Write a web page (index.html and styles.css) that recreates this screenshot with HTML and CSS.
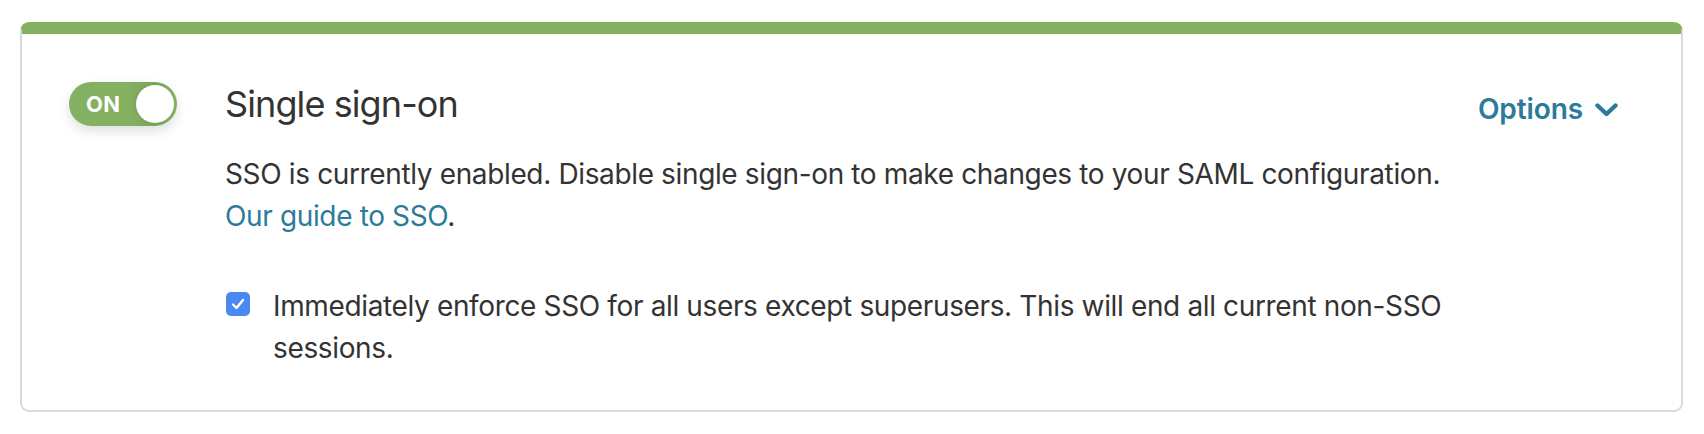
FILE: index.html
```html
<!DOCTYPE html>
<html lang="en">
<head>
<meta charset="utf-8">
<title>Single sign-on</title>
<link rel="stylesheet" href="styles.css">
</head>
<body>
<section class="card">
  <div class="toggle-col">
    <div class="toggle">
      <span class="toggle-label">ON</span>
      <span class="toggle-knob"></span>
    </div>
  </div>
  <div class="content">
    <div class="header">
      <h2 class="title">Single sign-on</h2>
      <button class="options">Options
        <svg class="chev" width="23" height="14" viewBox="0 0 23 14"><path d="M2.5 2.5 L11.5 11 L20.5 2.5" fill="none" stroke="currentColor" stroke-width="4.4" stroke-linecap="round" stroke-linejoin="round"/></svg>
      </button>
    </div>
    <p class="desc">SSO is currently enabled. Disable single sign-on to make changes to your SAML configuration.<br><a class="link" href="#">Our guide to SSO</a>.</p>
    <label class="check-row">
      <span class="checkbox"><svg width="14" height="12" viewBox="0 0 14 12"><path d="M2 6.5 L5.5 10 L12 2" fill="none" stroke="#fff" stroke-width="2.4" stroke-linecap="round" stroke-linejoin="round"/></svg></span>
      <span class="check-text">Immediately enforce SSO for all users except superusers. This will end all current non-SSO sessions.</span>
    </label>
  </div>
</section>
</body>
</html>
```
FILE: styles.css
```css
* { box-sizing: border-box; }
html, body { margin: 0; padding: 0; background: #fff; }
body {
  font-family: Inter, "Noto Sans", "Liberation Sans", sans-serif;
  color: #333;
  padding: 22px 21px 0 20px;
}
.card {
  display: flex;
  border: 2px solid #d9d9d9;
  border-top: 12px solid #84b062;
  border-radius: 9px;
  padding: 48px 63px 46px 47px;
  height: 390px;
}
.toggle-col { flex: 0 0 auto; margin-right: 48px; }
.toggle {
  position: relative;
  width: 108px;
  height: 44px;
  border-radius: 22px;
  background: linear-gradient(90deg, #84b062 0%, #84b062 55%, #7aa659 80%, #84b062 100%);
  box-shadow: 0 5px 12px rgba(0,0,0,0.13);
  display: flex;
  align-items: center;
}
.toggle-label {
  color: #fff;
  font-weight: 700;
  font-size: 22px;
  line-height: 1;
  margin-left: 17px;
  letter-spacing: 0.2px;
}
.toggle-knob {
  position: absolute;
  right: 3px;
  top: 3px;
  width: 38px;
  height: 38px;
  border-radius: 50%;
  background: #fff;
  box-shadow: -1px 0 3px rgba(0,0,0,0.08);
}
.content { flex: 1 1 auto; min-width: 0; }
.header { display: flex; justify-content: space-between; align-items: flex-start; }
.title {
  margin: 0;
  font-size: 36px;
  line-height: 44px;
  font-weight: 400;
  color: #333;
  letter-spacing: -0.9px;
}
.options {
  margin-top: 6px;
  border: 0;
  background: none;
  padding: 0;
  font-family: inherit;
  font-size: 28px;
  line-height: 42px;
  font-weight: 600;
  color: #2c7b9b;
  display: flex;
  align-items: center;
  gap: 12px;
  letter-spacing: -0.1px;
}
.chev { display: block; margin-top: 2px; }
.desc {
  margin: 23px 0 0 0;
  font-size: 28px;
  line-height: 42px;
  letter-spacing: -0.36px;
}
.link { color: #2c7b9b; text-decoration: none; }
.check-row {
  display: flex;
  align-items: flex-start;
  margin-top: 48px;
  margin-left: 1px;
}
.checkbox {
  flex: 0 0 auto;
  width: 24px;
  height: 24px;
  margin-top: 7px;
  margin-right: 23px;
  border-radius: 5px;
  background: #4b87f1;
  display: flex;
  align-items: center;
  justify-content: center;
}
.check-text {
  font-size: 28px;
  line-height: 42px;
  letter-spacing: -0.36px;
  max-width: 1200px;
}
```
